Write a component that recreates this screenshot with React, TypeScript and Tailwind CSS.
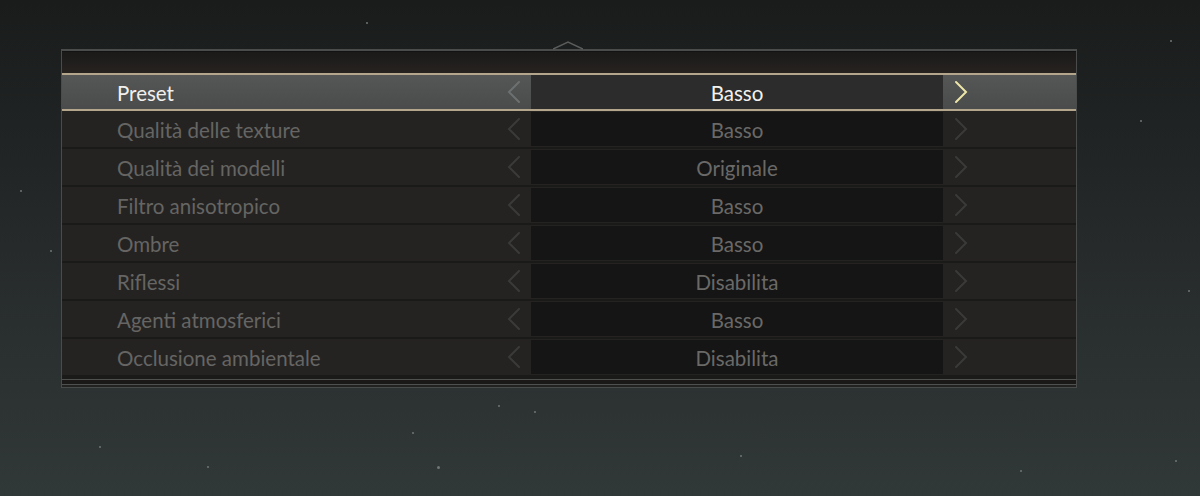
import React from "react";

const rows = [
  { label: "Preset", value: "Basso", selected: true },
  { label: "Qualità delle texture", value: "Basso" },
  { label: "Qualità dei modelli", value: "Originale" },
  { label: "Filtro anisotropico", value: "Basso" },
  { label: "Ombre", value: "Basso" },
  { label: "Riflessi", value: "Disabilita" },
  { label: "Agenti atmosferici", value: "Basso" },
  { label: "Occlusione ambientale", value: "Disabilita" },
];

const stars = [
  [112, 66, 1], [366, 22, 1], [1170, 40, 1], [1188, 290, 1], [1175, 460, 1],
  [207, 466, 1], [99, 446, 1], [437, 466, 1.5], [412, 432, 1], [498, 405, 1],
  [534, 411, 1], [50, 250, 1], [20, 190, 1], [1140, 120, 1], [1020, 470, 1], [740, 455, 1],
];

function Chevron({ dir, color }: { dir: "l" | "r"; color: string }) {
  return (
    <svg width="14" height="24" viewBox="0 0 14 24">
      <polyline
        points={dir === "r" ? "2,2 12,12 2,22" : "12,2 2,12 12,22"}
        fill="none"
        stroke={color}
        strokeWidth="2"
        strokeLinecap="round"
        strokeLinejoin="miter"
      />
    </svg>
  );
}

function Row({ label, value, selected }: { label: string; value: string; selected?: boolean }) {
  if (selected) {
    return (
      <div className="flex h-[38px] items-stretch border-y-2 border-[#b4a58d] bg-gradient-to-b from-[#555656] to-[#4a4b4b]">
        <div className="flex w-[435px] items-center pl-[55px] pt-[3px] text-[20.5px] text-[#f2f0ec]">{label}</div>
        <div className="flex w-[34px] items-center justify-center">
          <Chevron dir="l" color="#6c7070" />
        </div>
        <div className="flex w-[412px] items-center justify-center bg-[#2c2c2c] pt-[3px] text-[20.5px] text-[#f4f2ee]">
          {value}
        </div>
        <div className="flex w-[36px] items-center justify-center">
          <Chevron dir="r" color="#ece6a8" />
        </div>
        <div className="flex-1" />
      </div>
    );
  }
  return (
    <div className="flex h-[38px] items-center border-b-2 border-[#1a1a19] bg-[#242322]">
      <div className="flex w-[435px] items-center pl-[55px] pt-[3px] text-[20.5px] text-[#666563]">{label}</div>
      <div className="flex w-[34px] items-center justify-center">
        <Chevron dir="l" color="#3a3a39" />
      </div>
      <div className="flex h-[34px] w-[412px] items-center justify-center bg-[#151515] pt-[3px] text-[20.5px] text-[#6a6967]">
        {value}
      </div>
      <div className="flex w-[36px] items-center justify-center">
        <Chevron dir="r" color="#3a3a39" />
      </div>
      <div className="flex-1" />
    </div>
  );
}

export default function App() {
  return (
    <div
      className="relative h-[496px] w-[1200px] overflow-hidden bg-gradient-to-b from-[#1a1c1c] via-[#262a2a] to-[#313838] pl-[61px] pt-[41px]"
      style={{ fontFamily: "Lato, 'Open Sans', sans-serif" }}
    >
      {stars.map(([x, y, s], i) => (
        <div
          key={i}
          className="absolute rounded-full bg-[#6f7676]"
          style={{ left: x, top: y, width: s * 2, height: s * 2 }}
        />
      ))}
      <div className="relative w-[1016px]">
        <div className="relative h-[8px]">
          <svg className="absolute left-[492px] top-0" width="30" height="9" viewBox="0 0 30 9">
            <polyline points="0,8 15,1 30,8" fill="none" stroke="#5a5d5c" strokeWidth="1.5" />
          </svg>
        </div>
        <div className="border-x border-t-2 border-b border-[#4a4c4b] bg-[#1c1a19]">
          <div className="h-[22px] border-t border-[#141313] bg-gradient-to-b from-[#1b1a19] to-[#262220]" />
          {rows.map((r) => (
            <Row key={r.label} {...r} />
          ))}
          <div className="h-[2px] bg-[#1a1a19]" />
          <div className="h-[1px] bg-[#4e504f]" />
          <div className="h-[4px] bg-[#1a1918]" />
          <div className="h-[1px] bg-[#4e504f]" />
          <div className="h-[2px] bg-[#222221]" />
        </div>
      </div>
    </div>
  );
}
